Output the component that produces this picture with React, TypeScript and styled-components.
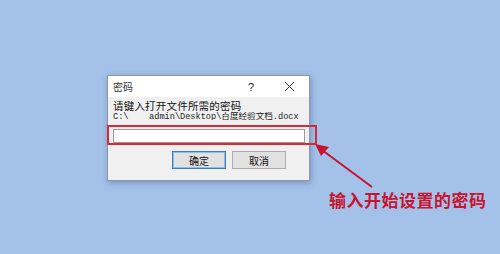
import React from "react";
import styled, { createGlobalStyle } from "styled-components";

const Global = createGlobalStyle`
  html, body { margin: 0; padding: 0; }
  body { background: #a3c1e9; font-family: "Noto Sans CJK SC", "Noto Sans", sans-serif; }
`;

const Page = styled.div`
  position: relative;
  width: 500px;
  height: 254px;
  box-sizing: border-box;
  padding: 75px 0 0 107px;
  background: #a3c1e9;
  overflow: hidden;
`;

const Dialog = styled.div`
  width: 203px;
  height: 106px;
  box-sizing: border-box;
  border: 1px solid #8c96a6;
  background: #f0f0f0;
  box-shadow: 1px 2px 6px rgba(40, 60, 100, 0.35);
  display: flex;
  flex-direction: column;
`;

const TitleBar = styled.div`
  height: 21px;
  flex-shrink: 0;
  background: #ffffff;
  display: flex;
  align-items: center;
  padding-left: 5px;
  font-size: 10px;
  color: #333;
`;

const Title = styled.span`
  flex: 1;
  font-family: "Noto Sans CJK SC", sans-serif;
`;

const TitleButton = styled.span<{ $w: number }>`
  width: ${(p) => p.$w}px;
  height: 21px;
  display: flex;
  align-items: center;
  justify-content: center;
  font-family: "Liberation Sans", sans-serif;
  font-size: 11px;
  color: #222;
`;

const Body = styled.div`
  flex: 1;
  display: flex;
  flex-direction: column;
  padding: 2px 4px 0 5px;
`;

const Prompt = styled.div`
  font-size: 10.5px;
  line-height: 13px;
  color: #111;
  font-family: "Noto Sans CJK SC", sans-serif;
  letter-spacing: 0.2px;
`;

const PathLine = styled.div`
  height: 8px;
  overflow: hidden;
  font-family: "Liberation Mono", "Noto Sans CJK SC", monospace;
  font-size: 8.6px;
  line-height: 11px;
  color: #222;
  white-space: nowrap;
`;

const Input = styled.div`
  margin-top: 9px;
  height: 14px;
  width: 192px;
  flex-shrink: 0;
  box-sizing: border-box;
  border: 1px solid #9a9a9a;
  background: #ffffff;
`;

const ButtonRow = styled.div`
  display: flex;
  gap: 6px;
  margin-top: 8px;
  padding-left: 59px;
`;

const Button = styled.div<{ $primary?: boolean }>`
  width: 54px;
  height: 18px;
  box-sizing: border-box;
  border: 1px solid ${(p) => (p.$primary ? "#3c7fb1" : "#adadad")};
  box-shadow: ${(p) => (p.$primary ? "inset 0 0 0 1px #8cc0e6" : "none")};
  background: #e1e1e1;
  display: flex;
  align-items: center;
  justify-content: center;
  font-size: 10px;
  color: #111;
  font-family: "Noto Sans CJK SC", sans-serif;
`;

const Highlight = styled.div`
  position: absolute;
  left: 107px;
  top: 125px;
  width: 210px;
  height: 20px;
  box-sizing: border-box;
  border: 2px solid #d42a3c;
`;

const Arrow = styled.svg`
  position: absolute;
  left: 310px;
  top: 138px;
`;

const Label = styled.div`
  position: absolute;
  left: 329px;
  top: 189px;
  font-family: "Noto Sans CJK SC", serif;
  font-weight: 700;
  font-size: 17px;
  letter-spacing: 0.5px;
  line-height: 22px;
  color: #c8142f;
  white-space: nowrap;
`;

export default function App() {
  return (
    <>
      <Global />
      <Page>
        <Dialog>
          <TitleBar>
            <Title>密码</Title>
            <TitleButton $w={36}>?</TitleButton>
            <TitleButton $w={40}>
              <svg width="11" height="11" viewBox="0 0 11 11">
                <path d="M1 1 L10 10 M10 1 L1 10" stroke="#333" strokeWidth="1" />
              </svg>
            </TitleButton>
          </TitleBar>
          <Body>
            <Prompt>请键入打开文件所需的密码</Prompt>
            <PathLine>C:\&nbsp;&nbsp;&nbsp;&nbsp;admin\Desktop\百度经验文档.docx</PathLine>
            <Input />
            <ButtonRow>
              <Button $primary>确定</Button>
              <Button>取消</Button>
            </ButtonRow>
          </Body>
        </Dialog>
        <Highlight />
        <Arrow width="70" height="55" viewBox="0 0 70 55">
          <line x1="62" y1="49" x2="12" y2="12" stroke="#c8142f" strokeWidth="2" />
          <polygon points="5,6 19,9 11,18" fill="#c8142f" />
        </Arrow>
        <Label>输入开始设置的密码</Label>
      </Page>
    </>
  );
}
